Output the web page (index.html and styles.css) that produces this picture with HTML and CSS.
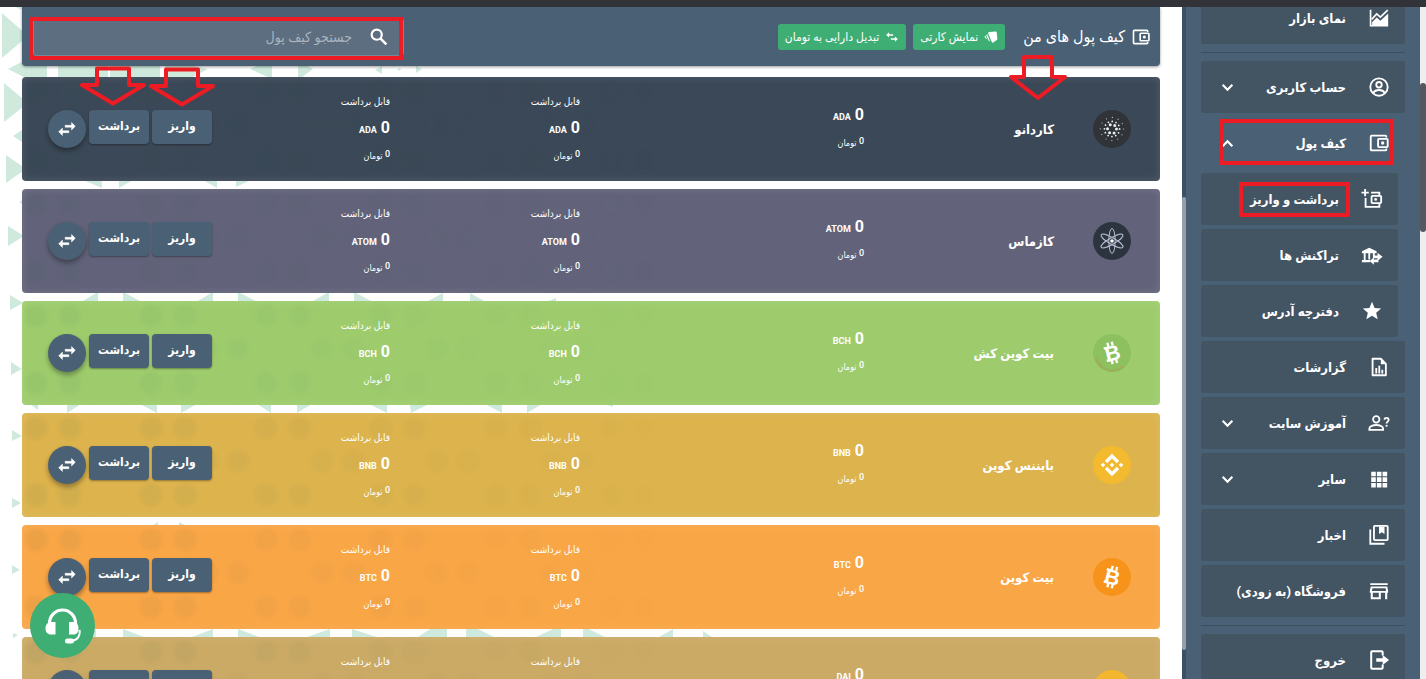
FILE: index.html
```html
<!DOCTYPE html>
<html lang="fa" dir="rtl">
<head>
<meta charset="utf-8">
<title>کیف پول های من</title>
<link rel="stylesheet" href="styles.css">
</head>
<body>
<svg class="sprite" aria-hidden="true">
  <symbol id="i-wallet" viewBox="0 0 24 24"><path d="M20 6V5a1 1 0 0 0-1-1H4a1 1 0 0 0-1 1v14a1 1 0 0 0 1 1h15a1 1 0 0 0 1-1v-1" fill="none" stroke="currentColor" stroke-width="2"/><rect x="11" y="7.500" width="10.500" height="9" rx="1" fill="none" stroke="currentColor" stroke-width="2"/><circle cx="16" cy="12" r="1.800"/></symbol>
  <symbol id="i-wallet-plus" viewBox="0 0 24 24"><g fill="none" stroke="currentColor" stroke-width="2"><path d="M4.500 1v8M.5 5h8M11 5h9v3M5 11v9.500h15V17"/><rect x="11.500" y="8.500" width="10.500" height="8" rx="1"/></g><circle cx="16" cy="12.500" r="1.500"/></symbol>
  <symbol id="i-chart" viewBox="0 0 24 24"><path d="M2.800 3v17.500H22" fill="none" stroke="currentColor" stroke-width="1.800"/><path d="M4.500 20v-3.500l5-5 4 3.500L22 7v13z"/><path d="M4 13.500l5.500-6 4 3.500L21.500 3.500" fill="none" stroke="currentColor" stroke-width="1.800"/></symbol>
  <symbol id="i-user" viewBox="0 0 24 24"><g fill="none" stroke="currentColor" stroke-width="2"><circle cx="12" cy="12" r="9.500"/><circle cx="12" cy="9.500" r="3"/><path d="M5.500 18.500c1.500-2.400 4-3.200 6.500-3.200s5 .8 6.500 3.200"/></g></symbol>
  <symbol id="i-bank" viewBox="0 0 24 24"><path d="M9 4l8 4v2H1V8zM3 10h2v8H3zM8 10h2v7H8zM13 10h2v3h-2zM1 17.500h9v2.500H1z"/><path d="M18 9.500l5.500 4.500-5.500 4.500v-3h-5v-3h5zM14 14.500V17h5v3h-5v2.500L9.500 18.500z"/></symbol>
  <symbol id="i-star" viewBox="0 0 24 24"><path d="M12 17.300 18.200 21l-1.650-7L22 9.250l-7.200-.6L12 2 9.200 8.650 2 9.250 7.450 14 5.800 21z"/></symbol>
  <symbol id="i-report" viewBox="0 0 24 24"><path d="M5 3h9l5.500 5.500V21H5z" fill="none" stroke="currentColor" stroke-width="2" stroke-linejoin="round"/><path d="M14 3l5.500 6H14zM8 13h2v6H8zM11.300 10.500h2V19h-2zM14.600 15h2v4h-2z"/></symbol>
  <symbol id="i-help" viewBox="0 0 24 24"><g fill="none" stroke="currentColor" stroke-width="2"><circle cx="9" cy="8" r="3.500"/><path d="M1.500 19.500V18c0-2.500 4.500-3.800 7.500-3.800s7.500 1.300 7.500 3.800v1.500z"/><path d="M18 8.500c0-3 4.500-2.800 4.500 0 0 2-2.200 1.900-2.200 4"/></g><circle cx="20.300" cy="15" r="1.200"/></symbol>
  <symbol id="i-grid" viewBox="0 0 24 24"><path d="M3.500 4h5v5h-5zM9.700 4h5v5h-5zM15.900 4h5v5h-5zM3.500 10.200h5v5h-5zM9.700 10.200h5v5h-5zM15.900 10.200h5v5h-5zM3.500 16.400h5v5h-5zM9.700 16.400h5v5h-5zM15.900 16.400h5v5h-5z"/></symbol>
  <symbol id="i-news" viewBox="0 0 24 24"><g fill="none" stroke="currentColor" stroke-width="2"><rect x="6.500" y="2" width="15" height="15.500" rx="1"/><path d="M2.500 6v15.500H18"/></g><path d="M12 3h6v8l-3-2-3 2z"/></symbol>
  <symbol id="i-store" viewBox="0 0 24 24"><path d="M2.500 3.500h19v2h-19zM3 7h18l1 5v2h-1v7h-2.300v-7H14v7H3v-7H2v-2zM5.200 14v4.800h6.600V14zM4.800 9l-.5 3h15.400l-.5-3z" fill-rule="evenodd"/></symbol>
  <symbol id="i-exit" viewBox="0 0 24 24"><path d="M16 7V3.500c0-.6-.4-1-1-1H4.500c-.6 0-1 .4-1 1v17c0 .6.4 1 1 1H15c.6 0 1-.4 1-1V17" fill="none" stroke="currentColor" stroke-width="2.200"/><path d="M9 10h7V6.500l7 5.500-7 5.500V14H9z"/></symbol>
  <symbol id="i-search" viewBox="0 0 24 24"><circle cx="9.500" cy="9.500" r="5.500" fill="none" stroke="currentColor" stroke-width="2.400"/><path d="M13.500 13.500l6.500 6.500" stroke="currentColor" stroke-width="2.800"/></symbol>
  <symbol id="i-swap" viewBox="0 0 24 24"><path d="M7 11l-4 4 4 4v-3h7v-2H7zM21 9l-4-4v3h-7v2h7v3z" stroke="currentColor" stroke-width=".6"/></symbol>
  <symbol id="i-swap-back" viewBox="0 0 24 24"><path d="M17 11l5 4.500-5 4.500v-3.300h-7v-2.400h7zM2 8.500 7 4v3.300h7v2.400H7V13z"/></symbol>
  <symbol id="i-cards" viewBox="0 0 24 24"><path d="M9.500 3.500 20 2.500c1 0 1.500.4 1.700 1.300L23 15c0 1-.3 1.500-1.200 2l-6 4.500c-.9.500-1.800.4-2.300-.5L7.200 6c-.3-1.200.5-2.300 2.300-2.500zM5.500 7l5 12.500-2.500-1L4 9.500zM2 9.500 5.500 16 2.500 14 .8 11z"/></symbol>
  <symbol id="i-chevron" viewBox="0 0 12 12"><path d="M1.500 3.500 6 8l4.500-4.500" fill="none" stroke="currentColor" stroke-width="2"/></symbol>
  <symbol id="i-arrow" viewBox="0 0 66 44"><path d="M17 3.500h32V20h15L33 38.500 2 20h15z" fill="none" stroke="#ed1c24" stroke-width="4" stroke-linejoin="round"/></symbol>
  <symbol id="i-arrow-tall" viewBox="0 0 58 48"><path d="M15 4h28v20h13L29 45 2 24h13z" fill="none" stroke="#ed1c24" stroke-width="4" stroke-linejoin="round"/></symbol>
  <symbol id="c-ada" viewBox="0 0 38 38"><circle cx="19" cy="19" r="19" fill="#303337"/><g fill="none" stroke="#e8f0f4" stroke-linecap="round"><circle cx="19" cy="19" r="4.500" stroke-width="3" stroke-dasharray="0 4.712"/><circle cx="19" cy="19" r="7.600" stroke-width="1.800" stroke-dasharray="0 3.979"/><circle cx="19" cy="19" r="11.600" stroke-width="1.200" stroke-dasharray="0 6.074" opacity=".8"/></g></symbol>
  <symbol id="c-atom" viewBox="0 0 38 38"><circle cx="19" cy="19" r="19" fill="#2c3440"/><g fill="none" stroke="#b9bfd0" stroke-width="1"><ellipse cx="19" cy="19" rx="3.200" ry="12.500"/><ellipse cx="19" cy="19" rx="3.200" ry="12.500" transform="rotate(60 19 19)"/><ellipse cx="19" cy="19" rx="3.200" ry="12.500" transform="rotate(120 19 19)"/></g><circle cx="19" cy="19" r="1.800" fill="#fff"/></symbol>
  <symbol id="c-bch" viewBox="0 0 38 38"><circle cx="19" cy="19" r="19" fill="#8dc05f"/><path d="M3.500 24a16.500 16.500 0 0 0 27 8.500" fill="none" stroke="#b39a5b" stroke-width="2.500" stroke-dasharray="1 1"/><g transform="rotate(-14 19 19)"><path d="M17 8v4M21.500 8v4M17 26v4M21.500 26v4M12 12.700h4M12 25.300h4" stroke="#fff" stroke-width="2.400"/><text x="19.500" y="26.500" class="coin-letter">B</text></g></symbol>
  <symbol id="c-btc" viewBox="0 0 38 38"><circle cx="19" cy="19" r="19" fill="#f7931a"/><g transform="rotate(14 19 19)"><path d="M17 8v4M21.500 8v4M17 26v4M21.500 26v4M12 12.700h4M12 25.300h4" stroke="#fff" stroke-width="2.400"/><text x="19.500" y="26.500" class="coin-letter">B</text></g></symbol>
  <symbol id="c-bnb" viewBox="0 0 38 38"><circle cx="19" cy="19" r="19" fill="#f3ba2f"/><path d="M13 16 19 10l6 6M13 22l6 6 6-6" fill="none" stroke="#fff" stroke-width="3.200"/><path d="M19 16.700l2.300 2.300-2.300 2.300-2.300-2.300zM10 16.700l2.300 2.300-2.300 2.300L7.700 19zM28 16.700l2.300 2.300-2.300 2.300-2.300-2.300z" fill="#fff"/></symbol>
  <symbol id="c-dai" viewBox="0 0 38 38"><circle cx="19" cy="19" r="19" fill="#f3b62f"/><path d="M12 11h7a8 8 0 0 1 0 16h-7zM9 17h20M9 21h20" fill="none" stroke="#fff" stroke-width="2"/></symbol>
</svg>

<div class="topbar"></div>
<div class="layout">
  <aside class="sidebar">
    <nav class="menu">
      <a class="item" href="#"><svg class="icon"><use href="#i-chart"/></svg><span>نمای بازار</span></a>
      <hr class="rule">
      <a class="item" href="#"><svg class="icon"><use href="#i-user"/></svg><span>حساب کاربری</span><svg class="chevron"><use href="#i-chevron"/></svg></a>
      <a class="item open" href="#"><svg class="icon"><use href="#i-wallet"/></svg><span>کیف پول</span><svg class="chevron up"><use href="#i-chevron"/></svg><i class="mark mark-item"></i></a>
      <a class="item sub" href="#"><svg class="icon"><use href="#i-wallet-plus"/></svg><span class="marked">برداشت و واریز<i class="mark mark-text"></i></span></a>
      <a class="item sub" href="#"><svg class="icon"><use href="#i-bank"/></svg><span>تراکنش ها</span></a>
      <a class="item sub" href="#"><svg class="icon"><use href="#i-star"/></svg><span>دفترچه آدرس</span></a>
      <a class="item" href="#"><svg class="icon"><use href="#i-report"/></svg><span>گزارشات</span></a>
      <a class="item" href="#"><svg class="icon"><use href="#i-help"/></svg><span>آموزش سایت</span><svg class="chevron"><use href="#i-chevron"/></svg></a>
      <a class="item" href="#"><svg class="icon"><use href="#i-grid"/></svg><span>سایر</span><svg class="chevron"><use href="#i-chevron"/></svg></a>
      <a class="item" href="#"><svg class="icon"><use href="#i-news"/></svg><span>اخبار</span></a>
      <a class="item" href="#"><svg class="icon"><use href="#i-store"/></svg><span>فروشگاه (به زودی)</span></a>
      <hr class="rule">
      <a class="item" href="#"><svg class="icon"><use href="#i-exit"/></svg><span>خروج</span></a>
    </nav>
    <div class="side-track"><div class="side-thumb"></div></div>
  </aside>

  <main class="main">
    <svg class="pattern" width="760" height="672" viewBox="0 7 760 672" aria-hidden="true"><path d="M2 13v45l26-22zM4 83v39l24-19zM6 155v28l20-14zM8 226v20l16-10zM10 295v15l13-7zM11 362v13l11-6zM12 430v11l10-5zM12 498v10l9-5zM12 565v9l8-4zM13 633v5l5-3zM8 69l39-20v40zM13 136l12-8v16zM19 202l5-3v6zM15 7h10v4zM58 60h50v20H58zM110 60h50v20h-50zM165 60v20h22l21-11zM250 69l22-10v20zM298 60v20l15-11zM375 70l7-4v8zM398 68v3l4-2zM416 66v7l6-4zM83 180h19v8zM119 180h14l-14 8zM203 180h14v8zM236 180h15l-15 7zM98 292v10H81zM123 292v10h19zM213 292v10h-17zM238 292v10h20zM329 292v10h-18zM354 292v10h19zM443 293v9h-17zM470 293v9h16zM556 298v4h-10zM30 404h8v6zM67 404h14l-14 9zM140 404h17v9zM181 404h16l-16 9zM257 404h14v9zM297 404h15l-15 9zM369 404h18v9zM410 404h19l-18 9zM485 404h17v9zM527 404h15l-15 9zM605 404h8v3zM152 526l6-4v4zM179 522v4h8zM96 629v8H86zM123 629v8h21zM213 629v8h-21zM238 629v8h21zM330 629v8h-23zM352 629v8h25zM430 629h17v8h-29zM466 629h12l16 8h-28zM553 629h8v8h-25zM583 629h6l16 8h-22zM673 629v8h-14zM703 631v6h9z"/></svg>

    <header class="head">
      <h1 class="title"><svg class="title-icon"><use href="#i-wallet"/></svg>کیف پول های من</h1>
      <div class="actions">
        <button class="pill" type="button"><svg class="pill-icon"><use href="#i-cards"/></svg>نمایش کارتی</button>
        <button class="pill" type="button"><svg class="pill-icon"><use href="#i-swap-back"/></svg>تبدیل دارایی به تومان</button>
      </div>
      <label class="search"><svg class="search-icon"><use href="#i-search"/></svg><input type="text" placeholder="جستجو کیف پول" aria-label="جستجو کیف پول"><i class="mark mark-search"></i></label>
    </header>

    <section class="cards">
      <article class="card ada">
        <svg class="coin"><use href="#c-ada"/></svg><h2 class="name">کاردانو</h2>
        <div class="stat"><p class="amount">0 <small>ADA</small></p><p class="fiat"><sup>0</sup> تومان</p></div>
        <div class="stat"><p class="label">قابل برداشت</p><p class="amount">0 <small>ADA</small></p><p class="fiat"><sup>0</sup> تومان</p></div>
        <div class="stat"><p class="label">قابل برداشت</p><p class="amount">0 <small>ADA</small></p><p class="fiat"><sup>0</sup> تومان</p></div>
        <div class="buttons"><button class="btn" type="button">واریز</button><button class="btn" type="button">برداشت</button><button class="round" type="button" aria-label="تبدیل"><svg><use href="#i-swap"/></svg></button></div>
        <svg class="arrow arrow-name"><use href="#i-arrow-tall"/></svg><svg class="arrow arrow-in"><use href="#i-arrow"/></svg><svg class="arrow arrow-out"><use href="#i-arrow"/></svg>
      </article>
      <article class="card atom">
        <svg class="coin"><use href="#c-atom"/></svg><h2 class="name">کازماس</h2>
        <div class="stat"><p class="amount">0 <small>ATOM</small></p><p class="fiat"><sup>0</sup> تومان</p></div>
        <div class="stat"><p class="label">قابل برداشت</p><p class="amount">0 <small>ATOM</small></p><p class="fiat"><sup>0</sup> تومان</p></div>
        <div class="stat"><p class="label">قابل برداشت</p><p class="amount">0 <small>ATOM</small></p><p class="fiat"><sup>0</sup> تومان</p></div>
        <div class="buttons"><button class="btn" type="button">واریز</button><button class="btn" type="button">برداشت</button><button class="round" type="button" aria-label="تبدیل"><svg><use href="#i-swap"/></svg></button></div>
      </article>
      <article class="card bch">
        <svg class="coin"><use href="#c-bch"/></svg><h2 class="name">بیت کوین کش</h2>
        <div class="stat"><p class="amount">0 <small>BCH</small></p><p class="fiat"><sup>0</sup> تومان</p></div>
        <div class="stat"><p class="label">قابل برداشت</p><p class="amount">0 <small>BCH</small></p><p class="fiat"><sup>0</sup> تومان</p></div>
        <div class="stat"><p class="label">قابل برداشت</p><p class="amount">0 <small>BCH</small></p><p class="fiat"><sup>0</sup> تومان</p></div>
        <div class="buttons"><button class="btn" type="button">واریز</button><button class="btn" type="button">برداشت</button><button class="round" type="button" aria-label="تبدیل"><svg><use href="#i-swap"/></svg></button></div>
      </article>
      <article class="card bnb">
        <svg class="coin"><use href="#c-bnb"/></svg><h2 class="name">بایننس کوین</h2>
        <div class="stat"><p class="amount">0 <small>BNB</small></p><p class="fiat"><sup>0</sup> تومان</p></div>
        <div class="stat"><p class="label">قابل برداشت</p><p class="amount">0 <small>BNB</small></p><p class="fiat"><sup>0</sup> تومان</p></div>
        <div class="stat"><p class="label">قابل برداشت</p><p class="amount">0 <small>BNB</small></p><p class="fiat"><sup>0</sup> تومان</p></div>
        <div class="buttons"><button class="btn" type="button">واریز</button><button class="btn" type="button">برداشت</button><button class="round" type="button" aria-label="تبدیل"><svg><use href="#i-swap"/></svg></button></div>
      </article>
      <article class="card btc">
        <svg class="coin"><use href="#c-btc"/></svg><h2 class="name">بیت کوین</h2>
        <div class="stat"><p class="amount">0 <small>BTC</small></p><p class="fiat"><sup>0</sup> تومان</p></div>
        <div class="stat"><p class="label">قابل برداشت</p><p class="amount">0 <small>BTC</small></p><p class="fiat"><sup>0</sup> تومان</p></div>
        <div class="stat"><p class="label">قابل برداشت</p><p class="amount">0 <small>BTC</small></p><p class="fiat"><sup>0</sup> تومان</p></div>
        <div class="buttons"><button class="btn" type="button">واریز</button><button class="btn" type="button">برداشت</button><button class="round" type="button" aria-label="تبدیل"><svg><use href="#i-swap"/></svg></button></div>
      </article>
      <article class="card dai">
        <svg class="coin"><use href="#c-dai"/></svg><h2 class="name">دای</h2>
        <div class="stat"><p class="amount">0 <small>DAI</small></p><p class="fiat"><sup>0</sup> تومان</p></div>
        <div class="stat"><p class="label">قابل برداشت</p><p class="amount">0 <small>DAI</small></p><p class="fiat"><sup>0</sup> تومان</p></div>
        <div class="stat"><p class="label">قابل برداشت</p><p class="amount">0 <small>DAI</small></p><p class="fiat"><sup>0</sup> تومان</p></div>
        <div class="buttons"><button class="btn" type="button">واریز</button><button class="btn" type="button">برداشت</button><button class="round" type="button" aria-label="تبدیل"><svg><use href="#i-swap"/></svg></button></div>
      </article>
    </section>
  </main>
  <div class="page-track"><div class="page-thumb"></div></div>
</div>

<button class="support" type="button" aria-label="پشتیبانی"><svg viewBox="0 0 36 36"><path d="M4.500 16v-1a13 13 0 0 1 26 0v1" fill="none" stroke="#fff" stroke-width="3.200"/><path d="M10.500 14v12.500H6c-3.500 0-5.500-2.500-5.500-6S2.500 14 6 14zM24 14h4c3.500 0 5.500 2.500 5.500 6.500s-2 6-5.500 6h-4z" fill="#fff"/><path d="M34.500 22c1 6-2 10-7.500 10.500" fill="none" stroke="#fff" stroke-width="2"/><rect x="20" y="30.500" width="9" height="5" rx="2.500" fill="#fff"/></svg></button>
</body>
</html>
```
FILE: styles.css
```css
* { box-sizing: border-box; }

body {
  margin: 0;
  height: 100vh;
  display: flex;
  flex-direction: column;
  overflow: hidden;
  background: #fff;
  color: #fff;
  font-family: Roboto, "DejaVu Sans Condensed", "DejaVu Sans", sans-serif;
  font-size: 13px;
}

h1, h2, p { margin: 0; }
button, input { font-family: inherit; color: inherit; border: 0; }
svg { fill: currentColor; display: block; flex: none; }

.sprite { position: absolute; left: 0; top: 0; width: 0; height: 0; }
.coin-letter { font: bold 21px "Liberation Sans", sans-serif; fill: #fff; text-anchor: middle; direction: ltr; }

.topbar { height: 7px; flex: none; background: #323338; z-index: 2; }
.layout { flex: 1; min-height: 0; display: flex; flex-direction: row-reverse; direction: ltr; }

/* Sidebar */
.sidebar { width: 238px; flex: none; display: flex; direction: rtl; background: #4a6074; overflow: hidden; }
.menu { flex: 1; margin-top: -15px; padding: 0 15px; display: flex; flex-direction: column; gap: 4px; }
.item {
  position: relative;
  height: 52px;
  flex: none;
  display: flex;
  align-items: center;
  padding: 0 15px 0 20px;
  gap: 22px;
  border-radius: 3px;
  background: #435463;
  color: #fff;
  text-decoration: none;
  font-weight: 700;
  white-space: nowrap;
}
.item.open { background: none; }
.item.sub { margin-right: 7px; }
.icon { width: 22px; height: 22px; }
.chevron { width: 13px; height: 13px; margin-right: auto; }
.chevron.up { transform: rotate(180deg); }
.rule { width: 100%; flex: none; height: 1px; margin: 4px 0; border: 0; background: #3d4e5d; }
.side-track { width: 4px; flex: none; background: #3c5064; }
.side-thumb { height: 453px; margin-top: 190px; background: #93a1ad; border-radius: 2px; }

.page-track { width: 6px; flex: none; background: #eee; order: -1; }
.page-thumb { height: 149px; margin-top: 76px; background: #55565f; border-radius: 3px; }

/* Outlines and arrows drawn over the interface */
.mark { position: absolute; border: 4px solid #ed1c24; pointer-events: none; }
.mark-item { inset: 2px 12px 4px 18px; }
.marked { position: relative; }
.mark-text { inset: -10px -11px; }
.mark-search { inset: -2px 0 -5px -5px; }
.arrow { position: absolute; width: 66px; height: 44px; }
.arrow-name { right: 93px; top: -24px; width: 58px; height: 48px; }
.arrow-in { left: 127px; top: -11px; }
.arrow-out { left: 58px; top: -12px; }

/* Wallet list */
.main { flex: 1; min-width: 0; position: relative; direction: rtl; padding: 0 22px; display: flex; flex-direction: column; gap: 11px; }
.pattern { position: absolute; left: 0; top: 0; fill: #cfeadd; }

.head {
  position: relative;
  z-index: 1;
  flex: none;
  height: 59px;
  padding: 0 9px 0 11px;
  display: flex;
  align-items: center;
  border-radius: 0 0 4px 4px;
  background: #4a6074;
  box-shadow: 0 1px 3px rgba(0, 0, 0, .4);
}
.title { display: flex; align-items: center; gap: 6px; font-size: 16px; font-weight: 500; white-space: nowrap; }
.title-icon { width: 20px; height: 20px; }
.actions { display: flex; gap: 7px; margin: 0 18px; }
.pill {
  height: 26px;
  padding: 0 7px;
  display: flex;
  align-items: center;
  gap: 6px;
  border-radius: 3px;
  background: #3fae74;
  font-size: 12px;
  font-weight: 500;
  white-space: nowrap;
}
.pill-icon { width: 14px; height: 14px; }
.search {
  position: relative;
  width: 371px;
  height: 38px;
  margin-right: auto;
  padding: 0 13px;
  display: flex;
  align-items: center;
  gap: 14px;
  background: #5c6e7f;
  border: 1px solid #75889a;
  border-radius: 3px;
}
.search-icon { width: 22px; height: 22px; }
.search input { flex: 1; min-width: 0; background: none; outline: 0; font-size: 14px; }
.search input::placeholder { color: #a9b3bd; opacity: 1; }

.cards { display: flex; flex-direction: column; gap: 8px; }
.card {
  position: relative;
  z-index: 1;
  height: 104px;
  flex: none;
  display: grid;
  grid-template-columns: 106px 190fr 284fr 190fr 178fr 190fr;
  align-items: center;
  border-radius: 4px;
  box-shadow: inset 0 0 8px rgba(255, 255, 255, .12);
}
.ada { z-index: 2; }
.card::before {
  content: "";
  position: absolute;
  left: 0;
  top: 0;
  width: 58%;
  height: 100%;
  background:
    radial-gradient(circle at 14px 15px, rgba(40, 90, 80, .06) 8px, transparent 14px),
    radial-gradient(circle at 48px 15px, rgba(40, 90, 80, .06) 8px, transparent 14px),
    radial-gradient(circle at 70px 48px, rgba(40, 90, 80, .05) 8px, transparent 14px),
    radial-gradient(circle at 101px 48px, rgba(40, 90, 80, .05) 8px, transparent 14px);
  background-size: 115px 67px;
  -webkit-mask-image: linear-gradient(to right, #000, transparent);
  mask-image: linear-gradient(to right, #000, transparent);
}
.ada { background: #3b4857; }
.atom { background: #62637a; }
.bch { background: #9ecc6d; }
.bnb { background: #dcb34d; }
.btc { background: #f9a646; }
.dai { background: #cbaa65; }

.coin { width: 38px; height: 38px; margin-right: 29px; position: relative; }
.name { font-size: 13px; font-weight: 700; white-space: nowrap; }
.stat { position: relative; font-weight: 500; line-height: 26px; }
.label { font-size: 10px; }
.amount { font-size: 16px; font-weight: 700; }
.amount small { font-size: 9px; }
.fiat { font-size: 9px; }
.fiat sup { font-size: 9px; line-height: 0; vertical-align: 2px; }
.buttons { position: relative; display: flex; align-items: flex-start; gap: 3px; }
.btn {
  width: 60px;
  height: 34px;
  padding: 0 0 2px;
  border-radius: 4px;
  background: #4a6074;
  font-size: 12px;
  font-weight: 700;
  box-shadow: 0 1px 2px rgba(0, 0, 0, .35);
}
.round {
  width: 38px;
  height: 38px;
  padding: 0;
  display: grid;
  place-items: center;
  border-radius: 50%;
  background: #4a6074;
  box-shadow: 0 3px 5px rgba(0, 0, 0, .35);
}
.round svg { width: 22px; height: 22px; }

.support {
  position: fixed;
  z-index: 3;
  left: 30px;
  bottom: 21px;
  width: 65px;
  height: 65px;
  padding: 0;
  display: grid;
  place-items: center;
  border-radius: 50%;
  background: #3fae74;
}
.support svg { width: 36px; height: 36px; }
```
